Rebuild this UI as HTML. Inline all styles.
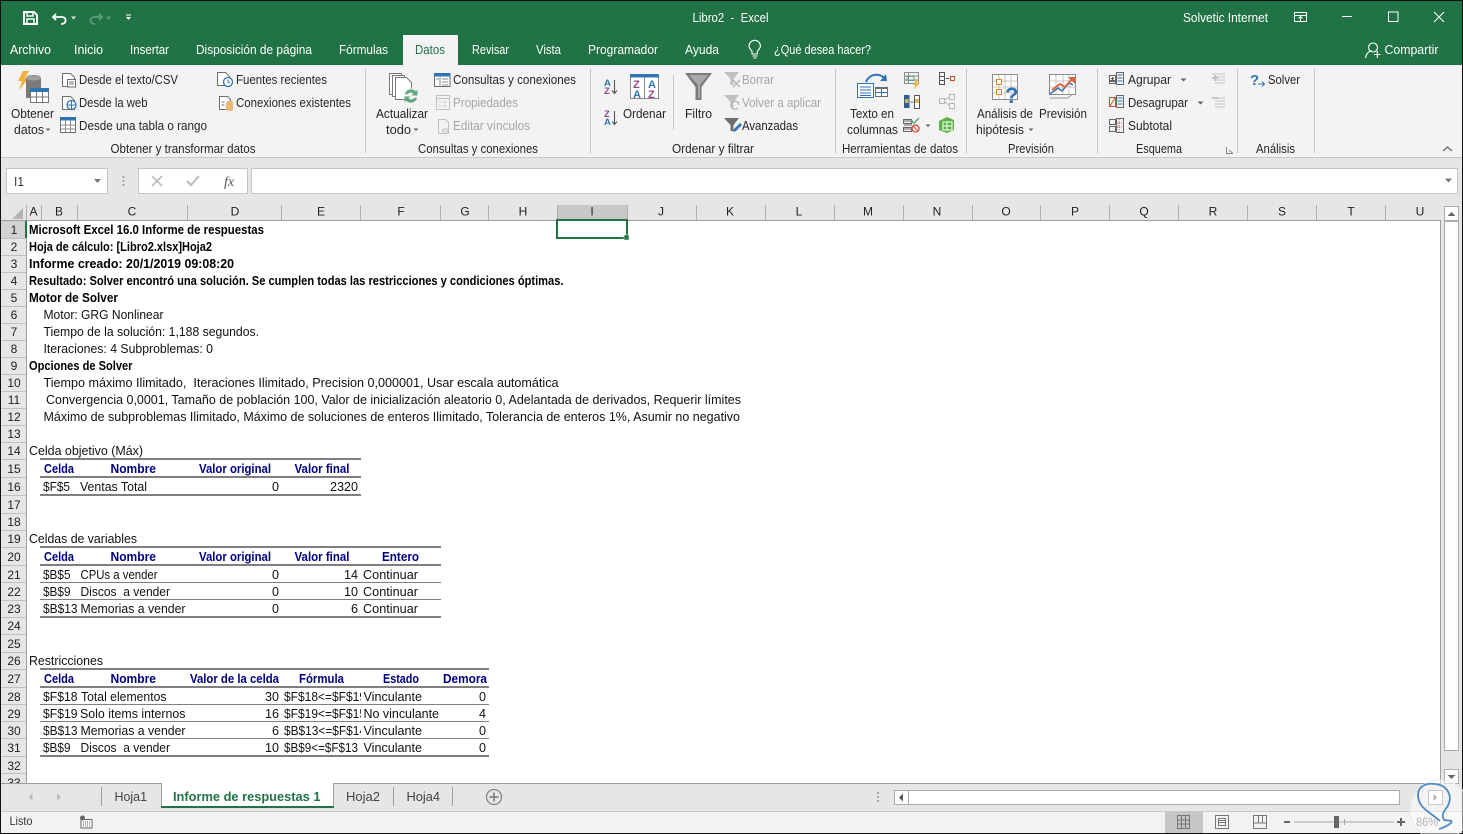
<!DOCTYPE html>
<html lang="es"><head><meta charset="utf-8"><title>Libro2 - Excel</title>
<style>
html,body{margin:0;padding:0;background:#fff;overflow:hidden}
svg{display:block}
text{font-family:"Liberation Sans",Arial,sans-serif;font-size:12.5px;fill:#262626;white-space:pre}
.w{fill:#fff}
.g{fill:#a6a6a6}
.s{font-size:12.5px;fill:#111}
.b{font-weight:700;fill:#000}
.h{font-weight:700;fill:#000080}
.c{font-size:12px;fill:#222;text-anchor:middle}
.l{font-size:12px;fill:#333}
.ln{fill:none;stroke:#767676;stroke-width:1}
</style></head><body>
<svg xmlns="http://www.w3.org/2000/svg" width="1463" height="834" viewBox="0 0 1463 834">
<defs>
<clipPath id="cf"><rect x="283" y="690" width="78" height="66"/></clipPath>
</defs>
<rect width="1463" height="834" fill="#e6e6e6"/>
<!-- title bar -->
<rect width="1463" height="65" fill="#217346"/>
<!-- QAT -->
<g fill="none" stroke="#fff" stroke-width="2">
<path d="M24 12h10l3 3v9H24z"/><path d="M27 12v4h6v-4" stroke-width="1.5"/><path d="M27 24v-5h7v5" stroke-width="1.5"/>
<path d="M56 14l-3 3 3 3M53.500 17H62c5 0 5 7-1 7" stroke-width="1.800"/>
<path d="M99 14l3 3-3 3M102 17h-8c-5 0-5 7 1 7" stroke="#5c9a78" stroke-width="1.800"/>
</g>
<path d="M71 16.500h5l-2.500 3zM106 16.500h5l-2.500 3z" fill="#fff" fill-opacity=".85"/><path d="M106 16.500h5l-2.500 3z" fill="#5c9a78"/>
<path d="M126 14.500h5v1h-5zM126 17h5l-2.500 3z" fill="#fff"/>
<text class="w" x="692.500" y="22" textLength="76" lengthAdjust="spacingAndGlyphs">Libro2  -  Excel</text>
<text class="w" x="1183" y="22" textLength="85" lengthAdjust="spacingAndGlyphs">Solvetic Internet</text>
<g fill="none" stroke="#fff" stroke-width="1">
<rect x="1294.500" y="12.500" width="12" height="9"/><path d="M1294 15.500h13M1300.500 21v-4M1298.500 18.500l2-2 2 2"/>
<path d="M1342 16.500h10"/><rect x="1388.500" y="12" width="9.500" height="9.500"/><path d="M1434 12l10 10M1444 12l-10 10"/>
</g>
<!-- tabs -->
<rect x="403" y="35" width="55" height="31" fill="#f3f3f3"/>
<text class="w" x="10" y="54" textLength="41" lengthAdjust="spacingAndGlyphs">Archivo</text>
<text class="w" x="74" y="54" textLength="29" lengthAdjust="spacingAndGlyphs">Inicio</text>
<text class="w" x="130" y="54" textLength="39" lengthAdjust="spacingAndGlyphs">Insertar</text>
<text class="w" x="196" y="54" textLength="116" lengthAdjust="spacingAndGlyphs">Disposición de página</text>
<text class="w" x="339" y="54" textLength="49" lengthAdjust="spacingAndGlyphs">Fórmulas</text>
<text x="415" y="54" textLength="30" lengthAdjust="spacingAndGlyphs" style="fill:#217346">Datos</text>
<text class="w" x="472" y="54" textLength="37" lengthAdjust="spacingAndGlyphs">Revisar</text>
<text class="w" x="536" y="54" textLength="25" lengthAdjust="spacingAndGlyphs">Vista</text>
<text class="w" x="588" y="54" textLength="70" lengthAdjust="spacingAndGlyphs">Programador</text>
<text class="w" x="685" y="54" textLength="34" lengthAdjust="spacingAndGlyphs">Ayuda</text>
<text class="w" x="774" y="54" textLength="97" lengthAdjust="spacingAndGlyphs">¿Qué desea hacer?</text>
<text class="w" x="1384.500" y="54" textLength="54" lengthAdjust="spacingAndGlyphs">Compartir</text>
<g fill="none" stroke="#fff" stroke-width="1.100">
<path d="M752 54v-2.500c-1-2-3-3-3-5.500a5.700 5.700 0 0 1 11.400 0c0 2.500-2 3.500-3 5.500V54zM752.500 56h5M753.500 58h3"/>
<circle cx="1373" cy="47.500" r="4.500"/><path d="M1365.500 58c.5-4 3-6.500 6-7.500M1374 54.500h6.500M1377.300 51v7"/>
</g>
<!-- ribbon -->
<rect x="0" y="65" width="1463" height="92" fill="#f3f3f3"/>
<rect x="403" y="64" width="55" height="3" fill="#f3f3f3"/>
<rect x="0" y="157" width="1463" height="1" fill="#c8c8c8"/>
<g fill="#c6c6c6">
<rect x="365" y="69" width="1" height="84"/><rect x="590" y="69" width="1" height="84"/><rect x="835" y="69" width="1" height="84"/><rect x="966" y="69" width="1" height="84"/><rect x="1097" y="69" width="1" height="84"/><rect x="1237" y="69" width="1" height="84"/><rect x="1314" y="69" width="1" height="84"/><rect x="673" y="75" width="1" height="55"/>
</g>
<!-- ribbon labels -->
<text x="79" y="84" textLength="99" lengthAdjust="spacingAndGlyphs">Desde el texto/CSV</text>
<text x="79" y="107" textLength="68.500" lengthAdjust="spacingAndGlyphs">Desde la web</text>
<text x="79" y="130" textLength="128" lengthAdjust="spacingAndGlyphs">Desde una tabla o rango</text>
<text x="236" y="84" textLength="91" lengthAdjust="spacingAndGlyphs">Fuentes recientes</text>
<text x="236" y="107" textLength="115" lengthAdjust="spacingAndGlyphs">Conexiones existentes</text>
<text x="11" y="118" textLength="43" lengthAdjust="spacingAndGlyphs">Obtener</text>
<text x="14" y="134" textLength="30" lengthAdjust="spacingAndGlyphs">datos</text>
<text x="110.500" y="153" textLength="145" lengthAdjust="spacingAndGlyphs">Obtener y transformar datos</text>
<text x="376" y="118" textLength="52" lengthAdjust="spacingAndGlyphs">Actualizar</text>
<text x="386" y="134" textLength="25" lengthAdjust="spacingAndGlyphs">todo</text>
<text x="453" y="84" textLength="123" lengthAdjust="spacingAndGlyphs">Consultas y conexiones</text>
<text class="g" x="453" y="107" textLength="65" lengthAdjust="spacingAndGlyphs">Propiedades</text>
<text class="g" x="453" y="130" textLength="77" lengthAdjust="spacingAndGlyphs">Editar vínculos</text>
<text x="418" y="153" textLength="120" lengthAdjust="spacingAndGlyphs">Consultas y conexiones</text>
<text x="623" y="118" textLength="43" lengthAdjust="spacingAndGlyphs">Ordenar</text>
<text x="685" y="118" textLength="27" lengthAdjust="spacingAndGlyphs">Filtro</text>
<text class="g" x="742" y="84" textLength="32" lengthAdjust="spacingAndGlyphs">Borrar</text>
<text class="g" x="742" y="107" textLength="79" lengthAdjust="spacingAndGlyphs">Volver a aplicar</text>
<text x="742" y="130" textLength="56" lengthAdjust="spacingAndGlyphs">Avanzadas</text>
<text x="672" y="153" textLength="82" lengthAdjust="spacingAndGlyphs">Ordenar y filtrar</text>
<text x="850" y="118" textLength="44" lengthAdjust="spacingAndGlyphs">Texto en</text>
<text x="847" y="134" textLength="51" lengthAdjust="spacingAndGlyphs">columnas</text>
<text x="842" y="153" textLength="116" lengthAdjust="spacingAndGlyphs">Herramientas de datos</text>
<text x="977" y="118" textLength="56" lengthAdjust="spacingAndGlyphs">Análisis de</text>
<text x="976" y="134" textLength="48" lengthAdjust="spacingAndGlyphs">hipótesis</text>
<text x="1039" y="118" textLength="48" lengthAdjust="spacingAndGlyphs">Previsión</text>
<text x="1008" y="153" textLength="46" lengthAdjust="spacingAndGlyphs">Previsión</text>
<text x="1128" y="84" textLength="43" lengthAdjust="spacingAndGlyphs">Agrupar</text>
<text x="1128" y="107" textLength="60" lengthAdjust="spacingAndGlyphs">Desagrupar</text>
<text x="1128" y="130" textLength="44" lengthAdjust="spacingAndGlyphs">Subtotal</text>
<text x="1136" y="153" textLength="46" lengthAdjust="spacingAndGlyphs">Esquema</text>
<text x="1268" y="84" textLength="32" lengthAdjust="spacingAndGlyphs">Solver</text>
<text x="1256" y="153" textLength="39" lengthAdjust="spacingAndGlyphs">Análisis</text>
<!-- carets -->
<path d="M45.500 128.500h5l-2.500 2.500zM413.500 128.500h5l-2.500 2.500zM925.500 124.500h5l-2.500 2.500zM1028.500 128.500h5l-2.500 2.500zM1180.500 78.500h6l-3 3zM1197.500 101.500h6l-3 3z" fill="#666"/>
<!-- Obtener datos icon -->
<path d="M23 71h6l-4 7h4L19 90l3-9h-4z" fill="#f0b03c"/>
<path d="M26 78c0-4 15-4 15 0v10H30v10h-4z" fill="#7a7a7a"/>
<ellipse cx="33.500" cy="78" rx="7.500" ry="2.500" fill="#a0a0a0"/>
<rect x="30.500" y="88.500" width="18" height="14" fill="#fff" stroke="#767676"/><rect x="30" y="88" width="19" height="4" fill="#2f75b5"/>
<path d="M30 97h19M36.500 92v11M42.500 92v11" stroke="#767676" fill="none"/>
<!-- small docs -->
<g fill="#fff" stroke="#6e6e6e" stroke-width="1">
<path d="M62.500 73.500h8l4 4v9h-12z"/><path d="M62.500 96.500h8l4 4v9h-12z"/><path d="M217.500 72.500h8l4 4v9h-12z"/><path d="M219.500 96.500h8l3 3v10h-11z"/>
<rect x="67.500" y="79.500" width="8" height="7.500"/>
<rect x="60.500" y="118.500" width="15" height="14"/>
<rect x="434.500" y="73.500" width="15.500" height="13"/>
</g>
<path d="M69 82h5M69 84h5" stroke="#777"/>
<circle cx="71.500" cy="105" r="4.500" fill="#fff" stroke="#2f75b5" stroke-width="1.300"/><path d="M67 105h9M71.500 100.500v9" stroke="#2f75b5"/>
<rect x="60" y="117" width="16" height="3.500" fill="#2f75b5"/><path d="M60.500 125h15M60.500 129h15M65.500 120v12M70.500 120v12" stroke="#8c8c8c" fill="none"/>
<circle cx="228" cy="82" r="4.500" fill="#fff" stroke="#2f75b5" stroke-width="1.300"/><path d="M228 79.500V82l2 1" stroke="#2f75b5" fill="none"/>
<path d="M226 102.500c0-2 7-2 7 0v7c0 2-7 2-7 0z" fill="#e8b878"/><path d="M221.500 102h3M221.500 105h3" stroke="#777"/>
<!-- Actualizar -->
<g fill="#fff" stroke="#7a7a7a"><path d="M389.500 73.500h12v21h-12z"/><path d="M392.500 75.500h12v21h-12z"/><path d="M395.500 77.500h11l5 5v17h-16z"/></g>
<circle cx="411" cy="96" r="7.500" fill="#f3f3f3"/>
<path d="M405 94a6.500 6.500 0 0 1 11-2.500l1.500-2v6h-6l2-1.800a4 4 0 0 0-6 .5zM417 98a6.500 6.500 0 0 1-11 2.500l-1.500 2v-6h6l-2 1.800a4 4 0 0 0 6-.5z" fill="#5fa882"/>
<!-- Consultas -->
<rect x="434" y="73" width="16.500" height="3.500" fill="#2f75b5"/><path d="M440 77v9M442 79h6M442 82h6M442 85h6M436 79h3" stroke="#8c8c8c" fill="none"/>
<g stroke="#c0c0c0" fill="none"><rect x="436.500" y="95.500" width="13" height="14"/><path d="M437 98.500h12M439 102h2M443 102h4M439 106h2M443 106h4"/><path d="M438.500 119.500h7l3 3v11h-10z"/><path d="M442 130.500c1-2 6-2 6 0s-5 2-6 0z"/></g>
<!-- Sort icons -->
<text x="604" y="86" style="font-size:9.500px;font-weight:700;fill:#2f75b5">A</text><text x="604" y="94" style="font-size:9.500px;font-weight:700;fill:#8e4b8e">Z</text>
<text x="604" y="117" style="font-size:9.500px;font-weight:700;fill:#8e4b8e">Z</text><text x="604" y="125" style="font-size:9.500px;font-weight:700;fill:#2f75b5">A</text>
<path d="M614.500 80v13M612 90.500l2.500 3 2.500-3M614.500 111v13M612 121.500l2.500 3 2.500-3" fill="none" stroke="#555" stroke-width="1.100"/>
<rect x="630.500" y="74.500" width="28" height="24" fill="#fff" stroke="#8a8a8a"/><rect x="630" y="74" width="29" height="3.500" fill="#2f75b5"/><path d="M644.500 77v21" stroke="#8a8a8a"/>
<text x="633" y="88" style="font-size:11px;font-weight:700;fill:#8e4b8e">Z</text><text x="648" y="88" style="font-size:11px;font-weight:700;fill:#2f75b5">A</text>
<text x="633" y="98" style="font-size:11px;font-weight:700;fill:#2f75b5">A</text><text x="648" y="98" style="font-size:11px;font-weight:700;fill:#8e4b8e">Z</text>
<!-- Filter -->
<path d="M685 73h27l-10.500 14v13h-6V87z" fill="#7a7a7a"/><path d="M689 75h19l-8 10v13h-2V85z" fill="#a8a8a8"/>
<path d="M724 72h15l-5.500 7v6h-3v-6z" fill="#c0c0c0"/><path d="M733 80l7 7M740 80l-7 7" stroke="#b5b5b5" stroke-width="1.300"/>
<path d="M724 95h15l-5.500 7v6h-3v-6z" fill="#c0c0c0"/><path d="M739 105a4 4 0 1 0-1 3" fill="none" stroke="#b5b5b5" stroke-width="1.300"/>
<path d="M724 118h15l-5.500 7v6h-3v-6z" fill="#6e6e6e"/><path d="M733 132l1-3 6-6 2 2-6 6z" fill="#2f75b5"/>
<!-- Text to columns -->
<path d="M866 82c3-8 14-10 19-3" fill="none" stroke="#2f75b5" stroke-width="2"/><path d="M880 81l7 0-1-7z" fill="#2f75b5"/>
<rect x="857.500" y="83.500" width="16" height="14" fill="#fff" stroke="#2f75b5"/><path d="M860 87h11M860 90h11M860 93h11M860 95.500h11" stroke="#2f75b5"/>
<rect x="875.500" y="87.500" width="12" height="9" fill="#fff" stroke="#6e6e6e"/><rect x="875" y="87" width="13" height="2" fill="#6e6e6e"/><path d="M876 92.500h11M881.500 89v7" stroke="#2f75b5"/>
<!-- data tools -->
<g fill="none" stroke="#8c8c8c"><rect x="904.500" y="72.500" width="14" height="11"/><path d="M905 76h13M905 80h13M908.500 73v10"/></g><path d="M917 79l-4 6h2.500l-2 5 6-7h-3l2-4z" fill="#f0b03c"/>
<rect x="907" y="76.500" width="7" height="4" fill="none" stroke="#5fa882"/>
<rect x="939.500" y="72.500" width="5" height="12" fill="none" stroke="#555"/><path d="M940 76.500h4M940 80.500h4M946 78.500h3" stroke="#555"/><rect x="950.500" y="76.500" width="4" height="4" fill="none" stroke="#d9482b"/>
<rect x="904" y="95" width="5.500" height="13" fill="#2f5f8f"/><rect x="905" y="99" width="3.500" height="4" fill="#e0b060"/><rect x="914.500" y="95.500" width="5" height="13" fill="#fff" stroke="#555"/><rect x="915" y="99" width="4" height="4" fill="#e0b060"/><path d="M910.500 102h3" stroke="#2f75b5"/>
<g fill="none" stroke="#b8b8b8"><rect x="939.500" y="98.500" width="5" height="5"/><rect x="949.500" y="94.500" width="5" height="5"/><rect x="949.500" y="103.500" width="5" height="5"/><path d="M945 100l4-3M945 102l4 3"/></g>
<path d="M904 121h9M904 125h8M904 129h8" stroke="#666" fill="none"/><rect x="903.500" y="119.500" width="8" height="4" fill="none" stroke="#666"/><rect x="903.500" y="127.500" width="8" height="4" fill="none" stroke="#666"/><path d="M911 121l3 2 5-5" fill="none" stroke="#5fa882" stroke-width="1.500"/><circle cx="915.500" cy="128.500" r="3.500" fill="#fff" stroke="#d9482b" stroke-width="1.300"/><path d="M913 126l5 5" stroke="#d9482b"/>
<path d="M939 121l8-4 7 3v10l-7 3-8-3z" fill="#5fb04a"/><path d="M943 122h9v8h-9z" fill="none" stroke="#fff"/><path d="M947 122v8M943 126h9" stroke="#fff"/>
<!-- What-if -->
<g fill="#fff" stroke="#8c8c8c"><rect x="992.500" y="74.500" width="25" height="25"/></g><path d="M993 81h24M993 87h24M993 93h24M999 75v24M1005 75v24M1011 75v24" stroke="#c4c4c4" fill="none"/>
<rect x="996.500" y="79.500" width="5" height="5" fill="#fff" stroke="#e08a1e"/><rect x="996.500" y="89.500" width="5" height="5" fill="#fff" stroke="#e08a1e"/>
<text x="1005" y="103" style="font-size:22px;font-weight:700;fill:#2f75b5">?</text>
<!-- Forecast -->
<rect x="1049.500" y="74.500" width="26" height="20" fill="#fff" stroke="#8c8c8c"/><path d="M1050 81h25M1050 87h25M1056 75v19M1063 75v19M1069 75v19" stroke="#c4c4c4" fill="none"/>
<path d="M1050 94l8-6 4 3 7-8 4 2" fill="none" stroke="#2f75b5" stroke-width="1.500"/><path d="M1052 90l8-6 5 3 7-8" fill="none" stroke="#e0603c" stroke-width="1.800"/><path d="M1068 77h7v7z" fill="#e0603c"/><path d="M1050 98h18l4-3.500" fill="none" stroke="#999"/>
<!-- Outline -->
<g fill="none" stroke="#666"><rect x="1109.500" y="75.500" width="6" height="6"/><rect x="1109.500" y="80.500" width="6" height="3"/><rect x="1116.500" y="72.500" width="7" height="12"/><rect x="1116.500" y="95.500" width="7" height="12"/><rect x="1109.500" y="119.500" width="6" height="5"/><rect x="1109.500" y="126.500" width="6" height="5"/><rect x="1116.500" y="118.500" width="7" height="14"/></g>
<path d="M1117.500 75h5M1117.500 78h5M1117.500 81h5M1117.500 98h5M1117.500 101h5M1117.500 104h5" stroke="#2f75b5"/>
<path d="M1111 78.500h3M1112.500 77v3" stroke="#555"/>
<rect x="1109.500" y="97.500" width="6" height="9" fill="#fff" stroke="#d9482b"/><path d="M1110 106l5-8" stroke="#d9482b"/>
<path d="M1119 119v13M1117 123h6M1117 127h6" stroke="#b06060" stroke-dasharray="1 1"/>
<g stroke="#c4c4c4" fill="none"><path d="M1212 74h13M1215 77h10M1215 80h10M1215 83h10M1212 98h13M1215 101h10M1215 104h10M1215 107h10"/></g>
<path d="M1212 78h6M1215 75v6M1212 98h6" stroke="#b8b8b8" stroke-width="1.500"/>
<!-- Solver -->
<text x="1250" y="85" style="font-size:15px;font-weight:700;fill:#2f75b5">?</text><path d="M1258 84h6M1262 81.500l2.500 2.500-2.500 2.500" stroke="#2f75b5" fill="none"/>
<!-- dialog launcher, collapse -->
<g fill="none" stroke="#888"><path d="M1226.500 147v6.500h6.500M1229 150l4 3.500"/></g>
<path d="M1443 151l4.500-4 4.500 4" fill="none" stroke="#777" stroke-width="1.500"/>
<!-- formula bar -->
<rect x="6.500" y="168.500" width="101" height="25" fill="#fff" stroke="#c6c6c6"/>
<rect x="138.500" y="168.500" width="109" height="25" fill="#fff" stroke="#c6c6c6"/>
<rect x="251.500" y="168.500" width="1206" height="25" fill="#fff" stroke="#c6c6c6"/>
<text x="14" y="186" textLength="10" lengthAdjust="spacingAndGlyphs" style="fill:#333">I1</text>
<path d="M94 179h7l-3.500 4zM1445 178.500l3.500 4 3.500-4" fill="#777"/>
<path d="M122.500 176h2v2h-2zM122.500 180h2v2h-2zM122.500 184h2v2h-2z" fill="#a6a6a6"/>
<path d="M152 176l10 10M162 176l-10 10" stroke="#bbb" stroke-width="1.600" fill="none"/>
<path d="M187 181l4 4 8-9" stroke="#bbb" stroke-width="2" fill="none"/>
<text x="224" y="186" style="font-family:'Liberation Serif',serif;font-style:italic;font-size:14px;fill:#555">fx</text>
<!-- grid -->
<rect x="0" y="204" width="1442" height="17" fill="#e6e6e6"/>
<rect x="0" y="221" width="27" height="563" fill="#e6e6e6"/>
<rect x="27" y="221" width="1414" height="562" fill="#fff"/>
<rect x="557" y="205" width="70" height="15" fill="#c8c8c8"/>
<rect x="1" y="221" width="25" height="17" fill="#d2d2d2"/>
<rect x="26" y="220" width="1415" height="1" fill="#9f9f9f"/><rect x="0" y="220" width="26" height="1" fill="#9f9f9f"/>
<rect x="26" y="221" width="1" height="563" fill="#9f9f9f"/><rect x="25" y="221" width="2" height="17" fill="#217346"/>
<rect x="1440" y="221" width="1" height="563" fill="#9f9f9f"/>
<path d="M23 208v11H12z" fill="#b4b4b4"/>
<g fill="#b0b0b0">
<rect x="26" y="205" width="1" height="15"/><rect x="41" y="205" width="1" height="15"/><rect x="77" y="205" width="1" height="15"/><rect x="187" y="205" width="1" height="15"/><rect x="281" y="205" width="1" height="15"/><rect x="360" y="205" width="1" height="15"/><rect x="440" y="205" width="1" height="15"/><rect x="488" y="205" width="1" height="15"/><rect x="557" y="205" width="1" height="15"/><rect x="627" y="205" width="1" height="15"/><rect x="696" y="205" width="1" height="15"/><rect x="765" y="205" width="1" height="15"/><rect x="834" y="205" width="1" height="15"/><rect x="903" y="205" width="1" height="15"/><rect x="972" y="205" width="1" height="15"/><rect x="1040" y="205" width="1" height="15"/><rect x="1109" y="205" width="1" height="15"/><rect x="1178" y="205" width="1" height="15"/><rect x="1247" y="205" width="1" height="15"/><rect x="1316" y="205" width="1" height="15"/><rect x="1385" y="205" width="1" height="15"/>
</g>
<g fill="#c0c0c0">
<rect x="1" y="238" width="25" height="1"/><rect x="1" y="255" width="25" height="1"/><rect x="1" y="272" width="25" height="1"/><rect x="1" y="289" width="25" height="1"/><rect x="1" y="306" width="25" height="1"/><rect x="1" y="323" width="25" height="1"/><rect x="1" y="340" width="25" height="1"/><rect x="1" y="357" width="25" height="1"/><rect x="1" y="374" width="25" height="1"/><rect x="1" y="391" width="25" height="1"/><rect x="1" y="408" width="25" height="1"/><rect x="1" y="425" width="25" height="1"/><rect x="1" y="442" width="25" height="1"/><rect x="1" y="459" width="25" height="1"/><rect x="1" y="477" width="25" height="1"/><rect x="1" y="495" width="25" height="1"/><rect x="1" y="513" width="25" height="1"/><rect x="1" y="530" width="25" height="1"/><rect x="1" y="547" width="25" height="1"/><rect x="1" y="565" width="25" height="1"/><rect x="1" y="582" width="25" height="1"/><rect x="1" y="600" width="25" height="1"/><rect x="1" y="617" width="25" height="1"/><rect x="1" y="634" width="25" height="1"/><rect x="1" y="652" width="25" height="1"/><rect x="1" y="669" width="25" height="1"/><rect x="1" y="687" width="25" height="1"/><rect x="1" y="704" width="25" height="1"/><rect x="1" y="721" width="25" height="1"/><rect x="1" y="738" width="25" height="1"/><rect x="1" y="756" width="25" height="1"/><rect x="1" y="773" width="25" height="1"/>
</g>
<!-- col headers -->
<text class="c" x="33.500" y="215.500">A</text><text class="c" x="59" y="215.500">B</text><text class="c" x="132" y="215.500">C</text><text class="c" x="235" y="215.500">D</text><text class="c" x="321" y="215.500">E</text><text class="c" x="401" y="215.500">F</text><text class="c" x="465" y="215.500">G</text><text class="c" x="523" y="215.500">H</text><text class="c" x="592" y="215.500">I</text><text class="c" x="661" y="215.500">J</text><text class="c" x="730" y="215.500">K</text><text class="c" x="799" y="215.500">L</text><text class="c" x="868" y="215.500">M</text><text class="c" x="937" y="215.500">N</text><text class="c" x="1006" y="215.500">O</text><text class="c" x="1075" y="215.500">P</text><text class="c" x="1144" y="215.500">Q</text><text class="c" x="1213" y="215.500">R</text><text class="c" x="1282" y="215.500">S</text><text class="c" x="1351" y="215.500">T</text><text class="c" x="1420" y="215.500">U</text>
<!-- row headers -->
<text class="c" x="14" y="234">1</text><text class="c" x="14" y="251">2</text><text class="c" x="14" y="268">3</text><text class="c" x="14" y="285">4</text><text class="c" x="14" y="302">5</text><text class="c" x="14" y="319">6</text><text class="c" x="14" y="336">7</text><text class="c" x="14" y="353">8</text><text class="c" x="14" y="370">9</text><text class="c" x="14" y="387">10</text><text class="c" x="14" y="404">11</text><text class="c" x="14" y="421">12</text><text class="c" x="14" y="438">13</text><text class="c" x="14" y="455">14</text><text class="c" x="14" y="473">15</text><text class="c" x="14" y="491">16</text><text class="c" x="14" y="509">17</text><text class="c" x="14" y="526">18</text><text class="c" x="14" y="543">19</text><text class="c" x="14" y="561">20</text><text class="c" x="14" y="579">21</text><text class="c" x="14" y="596">22</text><text class="c" x="14" y="613">23</text><text class="c" x="14" y="630">24</text><text class="c" x="14" y="648">25</text><text class="c" x="14" y="665">26</text><text class="c" x="14" y="683">27</text><text class="c" x="14" y="701">28</text><text class="c" x="14" y="718">29</text><text class="c" x="14" y="735">30</text><text class="c" x="14" y="752">31</text><text class="c" x="14" y="770">32</text><text class="c" x="14" y="787">33</text>
<!-- selection -->
<rect x="557" y="220" width="70" height="18" fill="none" stroke="#217346" stroke-width="2"/>
<rect x="624" y="235" width="5" height="5" fill="#217346" stroke="#fff" stroke-width=".5"/>
<!-- sheet text -->
<text class="s b" x="29" y="234" textLength="235" lengthAdjust="spacingAndGlyphs">Microsoft Excel 16.0 Informe de respuestas</text>
<text class="s b" x="29" y="251" textLength="183" lengthAdjust="spacingAndGlyphs">Hoja de cálculo: [Libro2.xlsx]Hoja2</text>
<text class="s b" x="29" y="268" textLength="205" lengthAdjust="spacingAndGlyphs">Informe creado: 20/1/2019 09:08:20</text>
<text class="s b" x="29" y="285" textLength="534.500" lengthAdjust="spacingAndGlyphs">Resultado: Solver encontró una solución. Se cumplen todas las restricciones y condiciones óptimas.</text>
<text class="s b" x="29" y="302" textLength="89" lengthAdjust="spacingAndGlyphs">Motor de Solver</text>
<text class="s" x="43.500" y="319" textLength="120" lengthAdjust="spacingAndGlyphs">Motor: GRG Nonlinear</text>
<text class="s" x="43.500" y="336" textLength="215.500" lengthAdjust="spacingAndGlyphs">Tiempo de la solución: 1,188 segundos.</text>
<text class="s" x="43.500" y="353" textLength="169.500" lengthAdjust="spacingAndGlyphs">Iteraciones: 4 Subproblemas: 0</text>
<text class="s b" x="29" y="370" textLength="103.500" lengthAdjust="spacingAndGlyphs">Opciones de Solver</text>
<text class="s" x="43.500" y="387" textLength="515" lengthAdjust="spacingAndGlyphs">Tiempo máximo Ilimitado,  Iteraciones Ilimitado, Precision 0,000001, Usar escala automática</text>
<text class="s" x="46" y="404" textLength="695" lengthAdjust="spacingAndGlyphs">Convergencia 0,0001, Tamaño de población 100, Valor de inicialización aleatorio 0, Adelantada de derivados, Requerir límites</text>
<text class="s" x="43.500" y="421" textLength="696.500" lengthAdjust="spacingAndGlyphs">Máximo de subproblemas Ilimitado, Máximo de soluciones de enteros Ilimitado, Tolerancia de enteros 1%, Asumir no negativo</text>
<text class="s" x="29" y="455" textLength="114" lengthAdjust="spacingAndGlyphs">Celda objetivo (Máx)</text>
<text class="s" x="29" y="543" textLength="108" lengthAdjust="spacingAndGlyphs">Celdas de variables</text>
<text class="s" x="29" y="665" textLength="74" lengthAdjust="spacingAndGlyphs">Restricciones</text>
<!-- table lines -->
<g fill="#7f7f7f">
<rect x="40" y="458" width="321" height="2"/><rect x="40" y="476" width="321" height="2"/><rect x="40" y="494" width="321" height="2"/>
<rect x="40" y="546" width="401" height="2"/><rect x="40" y="564" width="401" height="2"/><rect x="40" y="582" width="401" height="1"/><rect x="40" y="599" width="401" height="1"/><rect x="40" y="616" width="401" height="2"/>
<rect x="40" y="668" width="449" height="2"/><rect x="40" y="686" width="449" height="2"/><rect x="40" y="704" width="449" height="1"/><rect x="40" y="721" width="449" height="1"/><rect x="40" y="738" width="449" height="1"/><rect x="40" y="755" width="449" height="2"/>
</g>
<!-- table 1 -->
<text class="s h" x="44" y="473" textLength="30" lengthAdjust="spacingAndGlyphs">Celda</text>
<text class="s h" x="110.500" y="473" textLength="45.500" lengthAdjust="spacingAndGlyphs">Nombre</text>
<text class="s h" x="199" y="473" textLength="72" lengthAdjust="spacingAndGlyphs">Valor original</text>
<text class="s h" x="294.500" y="473" textLength="55" lengthAdjust="spacingAndGlyphs">Valor final</text>
<text class="s" x="43" y="491" textLength="27" lengthAdjust="spacingAndGlyphs">$F$5</text>
<text class="s" x="80" y="491" textLength="67" lengthAdjust="spacingAndGlyphs">Ventas Total</text>
<text class="s" x="272" y="491" textLength="7" lengthAdjust="spacingAndGlyphs">0</text>
<text class="s" x="330" y="491" textLength="28" lengthAdjust="spacingAndGlyphs">2320</text>
<!-- table 2 -->
<text class="s h" x="44" y="561" textLength="30" lengthAdjust="spacingAndGlyphs">Celda</text>
<text class="s h" x="110.500" y="561" textLength="45.500" lengthAdjust="spacingAndGlyphs">Nombre</text>
<text class="s h" x="199" y="561" textLength="72" lengthAdjust="spacingAndGlyphs">Valor original</text>
<text class="s h" x="294.500" y="561" textLength="55" lengthAdjust="spacingAndGlyphs">Valor final</text>
<text class="s h" x="382" y="561" textLength="37" lengthAdjust="spacingAndGlyphs">Entero</text>
<text class="s" x="43" y="579" textLength="27.500" lengthAdjust="spacingAndGlyphs">$B$5</text>
<text class="s" x="80.500" y="579" textLength="77" lengthAdjust="spacingAndGlyphs">CPUs a vender</text>
<text class="s" x="272" y="579" textLength="7" lengthAdjust="spacingAndGlyphs">0</text>
<text class="s" x="344" y="579" textLength="14" lengthAdjust="spacingAndGlyphs">14</text>
<text class="s" x="363" y="579" textLength="55" lengthAdjust="spacingAndGlyphs">Continuar</text>
<text class="s" x="43" y="596" textLength="27.500" lengthAdjust="spacingAndGlyphs">$B$9</text>
<text class="s" x="80.500" y="596" textLength="89.500" lengthAdjust="spacingAndGlyphs">Discos  a vender</text>
<text class="s" x="272" y="596" textLength="7" lengthAdjust="spacingAndGlyphs">0</text>
<text class="s" x="344" y="596" textLength="14" lengthAdjust="spacingAndGlyphs">10</text>
<text class="s" x="363" y="596" textLength="55" lengthAdjust="spacingAndGlyphs">Continuar</text>
<text class="s" x="43" y="613" textLength="34.500" lengthAdjust="spacingAndGlyphs">$B$13</text>
<text class="s" x="80.500" y="613" textLength="105" lengthAdjust="spacingAndGlyphs">Memorias a vender</text>
<text class="s" x="272" y="613" textLength="7" lengthAdjust="spacingAndGlyphs">0</text>
<text class="s" x="351" y="613" textLength="7" lengthAdjust="spacingAndGlyphs">6</text>
<text class="s" x="363" y="613" textLength="55" lengthAdjust="spacingAndGlyphs">Continuar</text>
<!-- table 3 -->
<text class="s h" x="44" y="683" textLength="30" lengthAdjust="spacingAndGlyphs">Celda</text>
<text class="s h" x="110.500" y="683" textLength="45.500" lengthAdjust="spacingAndGlyphs">Nombre</text>
<text class="s h" x="190" y="683" textLength="89" lengthAdjust="spacingAndGlyphs">Valor de la celda</text>
<text class="s h" x="299" y="683" textLength="45" lengthAdjust="spacingAndGlyphs">Fórmula</text>
<text class="s h" x="383" y="683" textLength="36" lengthAdjust="spacingAndGlyphs">Estado</text>
<text class="s h" x="443" y="683" textLength="44" lengthAdjust="spacingAndGlyphs">Demora</text>
<text class="s" x="43" y="701" textLength="34.500" lengthAdjust="spacingAndGlyphs">$F$18</text>
<text class="s" x="81" y="701" textLength="85.500" lengthAdjust="spacingAndGlyphs">Total elementos</text>
<text class="s" x="265" y="701" textLength="14" lengthAdjust="spacingAndGlyphs">30</text>
<g clip-path="url(#cf)"><text class="s" x="284" y="701" textLength="82" lengthAdjust="spacingAndGlyphs">$F$18&lt;=$F$19</text>
<text class="s" x="284" y="718" textLength="82" lengthAdjust="spacingAndGlyphs">$F$19&lt;=$F$15</text>
<text class="s" x="284" y="735" textLength="82" lengthAdjust="spacingAndGlyphs">$B$13&lt;=$F$14</text>
<text class="s" x="284" y="752" textLength="74" lengthAdjust="spacingAndGlyphs">$B$9&lt;=$F$13</text></g>
<text class="s" x="363.500" y="701" textLength="58.500" lengthAdjust="spacingAndGlyphs">Vinculante</text>
<text class="s" x="479" y="701" textLength="7" lengthAdjust="spacingAndGlyphs">0</text>
<text class="s" x="43" y="718" textLength="34.500" lengthAdjust="spacingAndGlyphs">$F$19</text>
<text class="s" x="80" y="718" textLength="105.500" lengthAdjust="spacingAndGlyphs">Solo items internos</text>
<text class="s" x="265" y="718" textLength="14" lengthAdjust="spacingAndGlyphs">16</text>
<text class="s" x="363.500" y="718" textLength="75.500" lengthAdjust="spacingAndGlyphs">No vinculante</text>
<text class="s" x="479" y="718" textLength="7" lengthAdjust="spacingAndGlyphs">4</text>
<text class="s" x="43" y="735" textLength="34.500" lengthAdjust="spacingAndGlyphs">$B$13</text>
<text class="s" x="80.500" y="735" textLength="105" lengthAdjust="spacingAndGlyphs">Memorias a vender</text>
<text class="s" x="272" y="735" textLength="7" lengthAdjust="spacingAndGlyphs">6</text>
<text class="s" x="363.500" y="735" textLength="58.500" lengthAdjust="spacingAndGlyphs">Vinculante</text>
<text class="s" x="479" y="735" textLength="7" lengthAdjust="spacingAndGlyphs">0</text>
<text class="s" x="43" y="752" textLength="27.500" lengthAdjust="spacingAndGlyphs">$B$9</text>
<text class="s" x="80.500" y="752" textLength="89.500" lengthAdjust="spacingAndGlyphs">Discos  a vender</text>
<text class="s" x="265" y="752" textLength="14" lengthAdjust="spacingAndGlyphs">10</text>
<text class="s" x="363.500" y="752" textLength="58.500" lengthAdjust="spacingAndGlyphs">Vinculante</text>
<text class="s" x="479" y="752" textLength="7" lengthAdjust="spacingAndGlyphs">0</text>
<!-- vertical scrollbar -->
<rect x="1441" y="204" width="21" height="580" fill="#e6e6e6"/>
<rect x="1444.500" y="206.500" width="14" height="14" fill="#fff" stroke="#ababab"/>
<path d="M1447.500 216h8l-4-4z" fill="#666"/>
<rect x="1444.500" y="221.500" width="14" height="529" fill="#fff" stroke="#ababab"/>
<rect x="1444.500" y="769.500" width="14" height="14" fill="#fff" stroke="#ababab"/>
<path d="M1447.500 775h8l-4 4z" fill="#666"/>
<!-- tab strip -->
<rect x="0" y="784" width="1463" height="28" fill="#e6e6e6"/>
<rect x="0" y="783" width="1441" height="1" fill="#9f9f9f"/>
<rect x="0" y="811" width="1463" height="1" fill="#c8c8c8"/>
<rect x="161" y="783" width="173" height="23" fill="#fff"/>
<rect x="161" y="783" width="1" height="23" fill="#9f9f9f"/><rect x="333" y="783" width="1" height="23" fill="#9f9f9f"/>
<rect x="161" y="806" width="173" height="2" fill="#217346"/>
<g fill="#9f9f9f"><rect x="101" y="787" width="1" height="19"/><rect x="393" y="787" width="1" height="19"/><rect x="452" y="787" width="1" height="19"/></g>
<path d="M32.500 793.500v7l-4-3.500zM57 793.500v7l4-3.500z" fill="#bdbdbd"/>
<text x="114.500" y="801" textLength="32.500" lengthAdjust="spacingAndGlyphs" style="fill:#444">Hoja1</text>
<text x="173" y="801" textLength="147.500" lengthAdjust="spacingAndGlyphs" style="font-weight:700;fill:#217346">Informe de respuestas 1</text>
<text x="346" y="801" textLength="34" lengthAdjust="spacingAndGlyphs" style="fill:#444">Hoja2</text>
<text x="406.500" y="801" textLength="33.500" lengthAdjust="spacingAndGlyphs" style="fill:#444">Hoja4</text>
<circle cx="494" cy="797" r="7.500" fill="none" stroke="#858585" stroke-width="1.300"/><path d="M489.500 797h9M494 792.500v9" stroke="#777" stroke-width="1.500"/>
<path d="M877 792h2v2h-2zM877 796h2v2h-2zM877 800h2v2h-2z" fill="#a6a6a6"/>
<!-- horizontal scrollbar -->
<rect x="894.500" y="790.500" width="14" height="14" fill="#fff" stroke="#ababab"/>
<path d="M903 793.500v8l-4-4z" fill="#555"/>
<rect x="908.500" y="790.500" width="491" height="14" fill="#fff" stroke="#ababab"/>
<rect x="1428.500" y="790.500" width="14" height="14" fill="#fff" stroke="#c8c8c8"/>
<!-- status bar -->
<rect x="0" y="812" width="1463" height="21" fill="#f2f2f2"/>
<text class="l" x="9.500" y="825" textLength="23" lengthAdjust="spacingAndGlyphs">Listo</text>
<rect x="81" y="819.500" width="11" height="8.500" fill="#fff" stroke="#666"/><circle cx="82.500" cy="818" r="2.500" fill="#666"/><path d="M83 822h8M83 824h8M83 826h8" stroke="#666" stroke-dasharray="1 1"/>
<rect x="1165" y="812" width="38" height="21" fill="#c6c6c6"/>
<g fill="none" stroke="#767676"><rect x="1177.500" y="815.500" width="12" height="13"/><path d="M1181.500 816v12M1185.500 816v12M1178 820h11M1178 824h11"/>
<rect x="1215.500" y="815.500" width="13" height="13"/><rect x="1218.500" y="818.500" width="7" height="7"/><path d="M1219 820.500h6M1219 822.500h6"/>
<rect x="1253.500" y="815.500" width="13" height="13"/><path d="M1254 823h12M1258.500 816v7M1262.500 816v7"/></g>
<path d="M1284 822h6" stroke="#666" stroke-width="2"/><path d="M1294 822h100M1344.500 819v6" stroke="#a6a6a6"/>
<rect x="1334" y="816" width="5" height="12" fill="#666"/>
<path d="M1397 822h8M1401 818v8" stroke="#666" stroke-width="2"/>
<text class="l" x="1416" y="826" textLength="22" lengthAdjust="spacingAndGlyphs" style="fill:#666">86%</text>
<!-- black window border -->
<rect x="0" y="0" width="1463" height="1" fill="#111"/>
<rect x="0" y="0" width="1" height="834" fill="#111"/>
<rect x="1462" y="0" width="1" height="834" fill="#111"/>
<rect x="0" y="833" width="1463" height="1" fill="#111"/>
<!-- watermark -->
<circle cx="1440" cy="810" r="30" fill="#fff" fill-opacity=".5" stroke="#e4e8ee" stroke-width="1"/>
<rect x="1428.500" y="790.500" width="14" height="14" fill="#fff" fill-opacity=".7" stroke="#c8c8c8"/>
<path d="M1433.500 794v7l3.500-3.500z" fill="#b0b0b0"/>
<path d="M1440 821C1430 812 1418 808 1418 795C1418 785 1428 783 1435 784C1447 785 1452 795 1449 803C1447 810 1440 812 1444 820C1450 821 1453 820 1451 823C1447 826 1443 828 1439 829" fill="none" stroke="#4f8ac4" stroke-width="1.800"/>
</svg>
</body></html>
